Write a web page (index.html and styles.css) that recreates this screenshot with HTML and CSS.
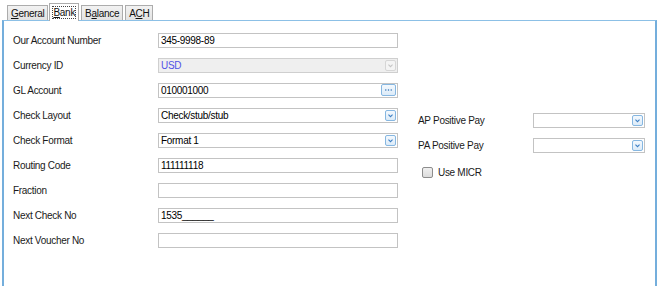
FILE: index.html
```html
<!DOCTYPE html>
<html lang="en">
<head>
  <meta charset="UTF-8" />
  <title>Bank</title>
  <link rel="stylesheet" href="styles.css">
</head>
<body>
  <div class="tabs">
    <div class="tab"><u>G</u>eneral</div>
    <div class="tab activo"><span class="foco"><u>B</u>ank</span></div>
    <div class="tab">B<u>a</u>lance</div>
    <div class="tab">A<u>C</u>H</div>
  </div>

  <div class="panel">
    <div class="form-izq">
      <label>Our Account Number</label>
      <div class="campo">345-9998-89</div>

      <label>Currency ID</label>
      <div class="campo deshabilitado">USD<span class="btn-drop gris"><svg viewBox="0 0 11 11"><path d="M3 4.5l2.5 2.5 2.5-2.5" /></svg></span></div>

      <label>GL Account</label>
      <div class="campo">010001000<span class="btn-puntos"><svg viewBox="0 0 14 11"><circle cx="4" cy="5.5" r="0.8"/><circle cx="7" cy="5.5" r="0.8"/><circle cx="10" cy="5.5" r="0.8"/></svg></span></div>

      <label>Check Layout</label>
      <div class="campo">Check/stub/stub<span class="btn-drop"><svg viewBox="0 0 11 11"><path d="M3 4.5l2.5 2.5 2.5-2.5" /></svg></span></div>

      <label>Check Format</label>
      <div class="campo">Format 1<span class="btn-drop"><svg viewBox="0 0 11 11"><path d="M3 4.5l2.5 2.5 2.5-2.5" /></svg></span></div>

      <label>Routing Code</label>
      <div class="campo">111111118</div>

      <label>Fraction</label>
      <div class="campo"></div>

      <label>Next Check No</label>
      <div class="campo">1535______</div>

      <label>Next Voucher No</label>
      <div class="campo"></div>
    </div>

    <div class="form-der">
      <label>AP Positive Pay</label>
      <div class="campo corto"><span class="btn-drop"><svg viewBox="0 0 11 11"><path d="M3 4.5l2.5 2.5 2.5-2.5" /></svg></span></div>

      <label>PA Positive Pay</label>
      <div class="campo corto"><span class="btn-drop"><svg viewBox="0 0 11 11"><path d="M3 4.5l2.5 2.5 2.5-2.5" /></svg></span></div>

      <div class="check"><span class="caja"></span>Use MICR</div>
    </div>
  </div>
</body>
</html>
```

FILE: styles.css
```css
body {
  font-family: "Liberation Sans", Arial, sans-serif;
  font-size: 10px;
  letter-spacing: -0.3px;
  color: #1a1a1a;
  background-color: #fff;
  margin: 0;
  padding: 0;
  overflow: hidden;
}
.tabs {
  display: flex;
  align-items: flex-end;
  height: 20px;
  padding-left: 7px;
}
.tab {
  height: 14px;
  line-height: 15px;
  padding: 0 3px;
  margin-right: 2px;
  border: 1px solid #acacac;
  border-bottom: none;
  background: linear-gradient(#f2f2f2, #e3e3e3);
  color: #111;
}
.tab.activo {
  height: 17px;
  line-height: 17px;
  padding: 0 3px;
  background: #fff;
  margin: 0 2px 0 -1px;
  position: relative;
  top: 1px;
  z-index: 1;
}
.foco {
  outline: 1px dotted #444;
  outline-offset: 0;
}
.panel {
  margin-left: 2px;
  width: 651px;
  height: 280px;
  border-top: 1px solid #8cc0e6;
  border-left: 2px solid #74aedc;
  border-right: 2px solid #74aedc;
  display: flex;
  align-items: flex-start;
  padding-top: 12px;
}
.form-izq {
  display: grid;
  grid-template-columns: 145px 240px;
  row-gap: 10px;
  align-items: center;
  margin-left: 9px;
}
.form-der {
  display: grid;
  grid-template-columns: 115px 112px;
  row-gap: 10px;
  align-items: center;
  margin-left: 20px;
  margin-top: 80px;
}
.campo {
  position: relative;
  height: 13px;
  line-height: 13px;
  border: 1px solid #c3c3c3;
  padding-left: 2px;
  background: #fff;
  color: #000;
  white-space: nowrap;
}
.campo.deshabilitado {
  background: #efefef;
  color: #5252e6;
  border-color: #cfcfcf;
}
.btn-drop {
  position: absolute;
  right: 1px;
  top: 1px;
  width: 9px;
  height: 9px;
  border: 1px solid #86b7e1;
  border-radius: 2px;
  background: linear-gradient(#f4f9fe, #dcebf8);
}
.btn-drop svg {
  display: block;
  width: 9px;
  height: 9px;
  fill: none;
  stroke: #3d7fc4;
  stroke-width: 1.3;
}
.btn-drop.gris {
  border-color: #d6d6d6;
  background: #f4f4f4;
}
.btn-drop.gris svg {
  stroke: #c4c4c4;
}
.btn-puntos {
  position: absolute;
  right: 1px;
  top: 0;
  width: 13px;
  height: 10px;
  border: 1px solid #86b7e1;
  border-radius: 2px;
  background: linear-gradient(#f4f9fe, #dcebf8);
}
.btn-puntos svg {
  display: block;
  width: 13px;
  height: 10px;
  fill: #2f6fb5;
}
.check {
  grid-column: 1 / span 2;
  display: flex;
  align-items: center;
  margin-left: 4px;
  margin-top: 4px;
}
.caja {
  width: 9px;
  height: 9px;
  border: 1px solid #8d8d8d;
  border-radius: 2px;
  background: linear-gradient(#f0f0f0, #dcdcdc);
  margin-right: 5px;
}
```
